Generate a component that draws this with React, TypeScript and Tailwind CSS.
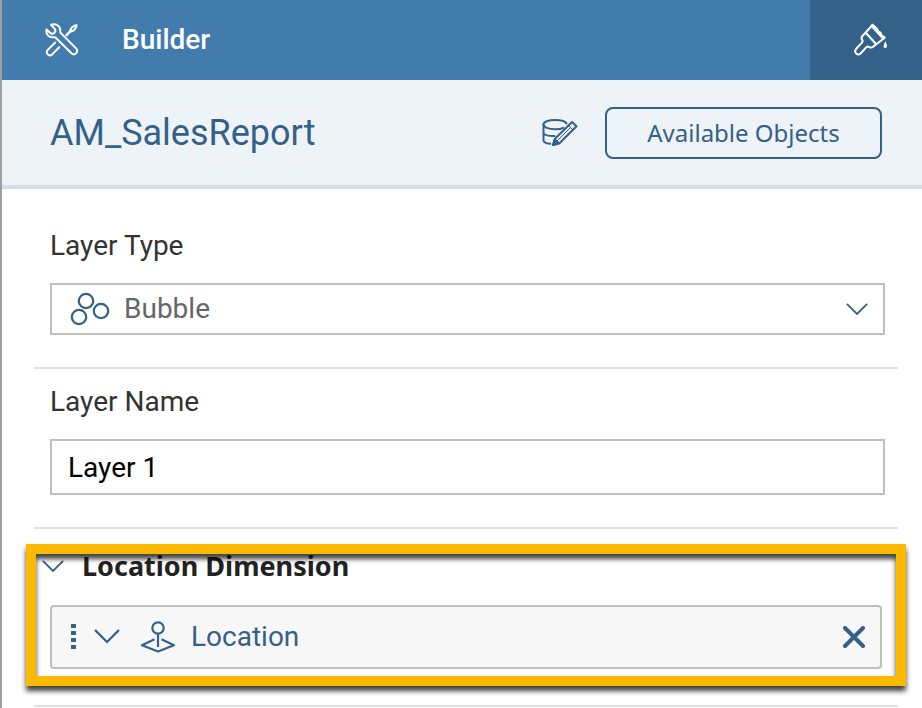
import { useState } from 'react';

function ToolsIcon() {
  return (
    <svg width="34" height="34" viewBox="0 0 34 34" fill="none" stroke="currentColor" strokeWidth="2" strokeLinecap="round" strokeLinejoin="round" aria-hidden="true">
      <path d="M6 1.800C11 .2 15.800 3.200 15.200 8.200c-.1.800 0 1.200.500 1.700L31.300 25.600c2.600 3-1.600 7.400-4.600 4.900L10.700 14.700c-.5-.5-1-.6-1.700-.5C4.200 15 .2 11 1.600 6.500L5 9.800c1.400 1.300 3.200 1.200 4.400 0 1.200-1.300 1.200-3 .1-4.200Z" />
      <path d="M10.200 19.500 2.800 26.900c-2.800 3.200 1.200 7.200 4.400 4.500L14.200 24.200" />
      <path d="M21.500 12.200 26 7.700" strokeWidth="2.500" />
      <path d="M25.800 8.200c-1.800-2.200 3.700-6.200 5.700-6.200.6 2-3.400 7.600-5.700 6.200Z" />
    </svg>
  );
}

function BrushIcon() {
  return (
    <svg width="34" height="34" viewBox="0 0 34 34" fill="none" stroke="currentColor" strokeWidth="2" strokeLinejoin="round" aria-hidden="true">
      <path d="M18.500 2 8.200 13.200c-1 1.200-.8 2.600.1 3.800.6 1 .4 1.800-.4 2.600L2.200 25.800c-3 3.600 1.500 7.500 4.600 4.400l5.400-5.800c.9-.9 1.800-1 2.800-.5 1.500.9 2.900.9 4-.1L31 14.500" />
      <path d="M12 10 22.500 21.500" />
      <path d="M18.500 1 23.500 5.200 24.500 8.200 27 9.200 28 12 31.500 14.200 29 16.500 16.800 3Z" fill="currentColor" strokeWidth="1" />
      <path d="M31.300 18c1 2.500 1.800 4 1.700 5.200-.2 2.400-3.400 2.400-3.500 0 0-1.200.9-2.700 1.800-5.200Z" fill="currentColor" stroke="none" />
    </svg>
  );
}

function EditDataIcon() {
  return (
    <svg width="36" height="30" viewBox="0 0 36 30" fill="none" stroke="currentColor" strokeWidth="2" strokeLinecap="round" strokeLinejoin="round" aria-hidden="true">
      <path d="M24.500 5.500C23.500 3.400 18.500 2 13 2 6.700 2 1.500 3.800 1.500 6.500S6.700 11.200 13 11.200c3.500 0 6.300-.4 8.300-1.400" />
      <path d="M1.500 6.500v16c0 1.600 2.800 2.800 6.700 3.300M1.500 15c.8 2 5.500 3.200 11 3.100" />
      <path d="m11 27 2-6.300L30 4l4.500 4.300-17 16.900Z" />
      <path d="m11 27 1.700-5.600 4 3.900Z" fill="currentColor" />
      <path d="m26.500 7.500 4.300 4.300M15.500 22.500 28.500 9.500" strokeWidth="1" />
    </svg>
  );
}

function BubbleIcon({ className = '' }: { className?: string }) {
  return (
    <svg className={className} width="40" height="34" viewBox="0 0 40 34" fill="none" stroke="currentColor" strokeWidth="2.200" aria-hidden="true">
      <circle cx="16" cy="9" r="7.200" />
      <circle cx="9" cy="25" r="7.200" />
      <circle cx="31" cy="19" r="7.200" />
    </svg>
  );
}

function ChevronIcon({ className = '' }: { className?: string }) {
  return (
    <svg className={className} viewBox="0 0 24 14" fill="none" stroke="currentColor" strokeWidth="2" strokeLinecap="round" aria-hidden="true">
      <path d="M1.500 1.500 12 12 22.500 1.500" />
    </svg>
  );
}

function LocationIcon() {
  return (
    <svg width="36" height="32" viewBox="0 0 36 32" fill="none" stroke="currentColor" strokeWidth="2.200" strokeLinejoin="round" aria-hidden="true">
      <circle cx="18" cy="7" r="5.700" />
      <path d="M18 12.700V26" />
      <path d="M14.500 18.200 2 24.200 18 30.500 34 24.200 21.500 18.200" />
    </svg>
  );
}

function GripIcon() {
  return (
    <svg width="5" height="26" viewBox="0 0 5 26" fill="currentColor" aria-hidden="true">
      <path d="M0 0h5v4H0zM0 7h5v4H0zM0 14h5v4H0zM0 21h5v4H0z" />
    </svg>
  );
}

export default function App() {
  const [layerName, setLayerName] = useState('Layer 1');
  const [open, setOpen] = useState(true);

  return (
    <div className="min-h-screen border-l-2 border-[#9f9f9f] bg-white font-[Roboto,sans-serif] text-[28px] leading-9 text-[#333333]">
      <header className="flex h-20 bg-[#427cac] text-white">
        <div className="flex flex-1 items-center gap-[43px] pl-[43px]">
          <ToolsIcon />
          <h1 className="font-medium">Builder</h1>
        </div>
        <button type="button" aria-label="Styling" className="flex w-28 items-center justify-center bg-[#346187] pl-2.5">
          <BrushIcon />
        </button>
      </header>

      <div className="flex items-center border-b-4 border-[#d1dfee] bg-[#eef3f8] pt-[27px] pb-[26px] pr-10 pl-12 text-[#346187]">
        <h2 className="flex-1 text-4xl">AM_SalesReport</h2>
        <button type="button" aria-label="Edit data source" className="mr-[27px]">
          <EditDataIcon />
        </button>
        <button type="button" className="h-[52px] w-[277px] rounded-lg border-2 border-[#346187] font-['Noto_Sans',sans-serif] text-2xl">
          Available Objects
        </button>
      </div>

      <main className="pr-6 pl-8">
        <section className="border-b-2 border-[#dfdfdf] pt-[39px] pr-[13px] pb-8 pl-4">
          <label htmlFor="layer-type" className="block">Layer Type</label>
          <div className="relative mt-[19px] text-[#346187]">
            <select id="layer-type" defaultValue="Bubble" className="block h-[52px] w-full appearance-none border-2 border-[#bfbfbf] bg-white pl-[72px] text-[#666666]">
              <option>Bubble</option>
            </select>
            <BubbleIcon className="pointer-events-none absolute top-[9px] left-5" />
            <ChevronIcon className="pointer-events-none absolute top-5 right-[17px] w-[22px]" />
          </div>
        </section>

        <section className="border-b-2 border-[#dfdfdf] pt-[15px] pr-[13px] pb-8 pl-4">
          <label htmlFor="layer-name" className="block">Layer Name</label>
          <input
            id="layer-name"
            type="text"
            value={layerName}
            onChange={(e) => setLayerName(e.target.value)}
            className="mt-[19px] block h-14 w-full border-2 border-[#bfbfbf] bg-white px-4 text-black"
          />
        </section>

        <section className="relative border-b-2 border-[#dfdfdf] pt-[19px] pr-4 pb-9 pl-4">
          <h3 className="-ml-2 font-['Noto_Sans',sans-serif] text-[27px] font-bold text-[#222222]">
            <button type="button" aria-expanded={open} onClick={() => setOpen(!open)} className="flex items-center gap-[18px]">
              <ChevronIcon className="w-[22px] text-[#346187]" />
              Location Dimension
            </button>
          </h3>
          {open && (
            <div className="mt-[21px] flex h-16 items-center rounded border-2 border-[#bfbfbf] bg-[#f7f7f7] pr-[15px] pl-[19px] text-[#346187]">
              <GripIcon />
              <button type="button" aria-label="Expand location" className="ml-[18px]">
                <ChevronIcon className="w-[26px]" />
              </button>
              <div className="ml-5 flex flex-1 items-center gap-[15px]">
                <LocationIcon />
                <span>Location</span>
              </div>
              <button type="button" aria-label="Remove location">
                <svg width="22" height="22" viewBox="0 0 22 22" fill="none" stroke="currentColor" strokeWidth="4" strokeLinecap="round" aria-hidden="true">
                  <path d="m2 2 18 18M20 2 2 20" />
                </svg>
              </button>
            </div>
          )}
          <div className="pointer-events-none absolute top-[15px] -right-2 -left-2 h-[142px] border-10 border-[#fbba00] shadow-[0_5px_5px_rgba(0,0,0,0.75),inset_0_5px_5px_rgba(0,0,0,0.75)]" />
        </section>
      </main>
    </div>
  );
}
